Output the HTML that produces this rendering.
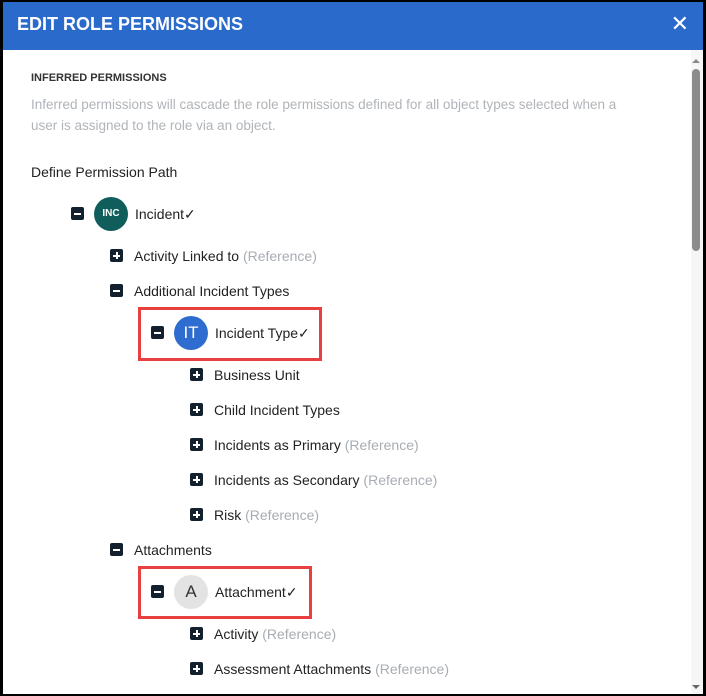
<!DOCTYPE html><html><head><style>
body{margin:0;width:706px;height:696px;background:#000;position:relative;overflow:hidden;font-family:"Liberation Sans",sans-serif}
#w{position:absolute;left:3px;top:2px;width:700px;height:692px;background:#fff;overflow:hidden}
#h{position:absolute;left:0;top:0;width:700px;height:48px;background:#2a6acb;color:#fff;font-weight:bold;font-size:18px;line-height:44px;padding-left:14px;box-sizing:border-box}
.x{position:absolute;right:14px;top:0;font-size:22px;font-weight:normal}
.t{position:absolute;font-size:14px;color:#222;white-space:nowrap;line-height:18px}
.g{color:#a8adb3}
.b{position:absolute;width:13px;height:13px;background:#13202e;border-radius:2px}
.b::before{content:"";position:absolute;left:3px;top:6px;width:7px;height:2px;background:#fff}
.p::after{content:"";position:absolute;left:5.5px;top:3px;width:2px;height:7px;background:#fff}
.c{position:absolute;width:34px;height:34px;border-radius:50%;text-align:center;line-height:34px}
.r{position:absolute;border:3px solid #e8403f;box-sizing:border-box}
</style></head><body><div id="w">
<div id="h">EDIT ROLE PERMISSIONS<span class="x">✕</span></div>
<div style="position:absolute;left:688px;top:48px;width:12px;height:644px;background:#f6f6f6"></div>
<div style="position:absolute;left:689px;top:67px;width:8px;height:182px;background:#8c8c8c;border-radius:4px"></div>
<div style="position:absolute;left:689px;top:57px;border:4px solid transparent;border-bottom-color:#888;border-top:0"></div>
<div style="position:absolute;left:689px;top:683px;border:4px solid transparent;border-top-color:#666;border-bottom:0"></div>
<div class="t" style="left:28px;top:67px;font-size:11px;font-weight:bold;color:#333">INFERRED PERMISSIONS</div>
<div class="t g" style="left:28px;top:92px;font-size:13.5px;line-height:21px;white-space:normal;width:615px;color:#b0b4b9">Inferred permissions will cascade the role permissions defined for all object types selected when a user is assigned to the role via an object.</div>
<div class="t" style="left:28px;top:161px">Define Permission Path</div>
<div class="b" style="left:68px;top:205px"></div>
<div class="c" style="left:91px;top:195px;background:#0f5e5c;color:#fff;font-size:10px;font-weight:bold">INC</div>
<div class="t" style="left:132px;top:203px">Incident✓</div>
<div class="b p" style="left:107px;top:247px"></div><div class="t" style="left:131px;top:245px">Activity Linked to <span class="g">(Reference)</span></div>
<div class="b" style="left:107px;top:282px"></div><div class="t" style="left:131px;top:280px">Additional Incident Types</div>
<div class="r" style="left:135px;top:305px;width:184px;height:54px"></div>
<div class="b" style="left:148px;top:324px"></div>
<div class="c" style="left:171px;top:314px;background:#2f6ccf;color:#fff;font-size:17px">IT</div>
<div class="t" style="left:212px;top:322px">Incident Type✓</div>
<div class="b p" style="left:187px;top:366px"></div><div class="t" style="left:211px;top:364px">Business Unit</div>
<div class="b p" style="left:187px;top:401px"></div><div class="t" style="left:211px;top:399px">Child Incident Types</div>
<div class="b p" style="left:187px;top:436px"></div><div class="t" style="left:211px;top:434px">Incidents as Primary <span class="g">(Reference)</span></div>
<div class="b p" style="left:187px;top:471px"></div><div class="t" style="left:211px;top:469px">Incidents as Secondary <span class="g">(Reference)</span></div>
<div class="b p" style="left:187px;top:506px"></div><div class="t" style="left:211px;top:504px">Risk <span class="g">(Reference)</span></div>
<div class="b" style="left:107px;top:541px"></div><div class="t" style="left:131px;top:539px">Attachments</div>
<div class="r" style="left:135px;top:564px;width:174px;height:53px"></div>
<div class="b" style="left:148px;top:583px"></div>
<div class="c" style="left:171px;top:573px;background:#e3e3e3;color:#333;font-size:17px">A</div>
<div class="t" style="left:212px;top:581px">Attachment✓</div>
<div class="b p" style="left:187px;top:625px"></div><div class="t" style="left:211px;top:623px">Activity <span class="g">(Reference)</span></div>
<div class="b p" style="left:187px;top:660px"></div><div class="t" style="left:211px;top:658px">Assessment Attachments <span class="g">(Reference)</span></div>
</div></body></html>
